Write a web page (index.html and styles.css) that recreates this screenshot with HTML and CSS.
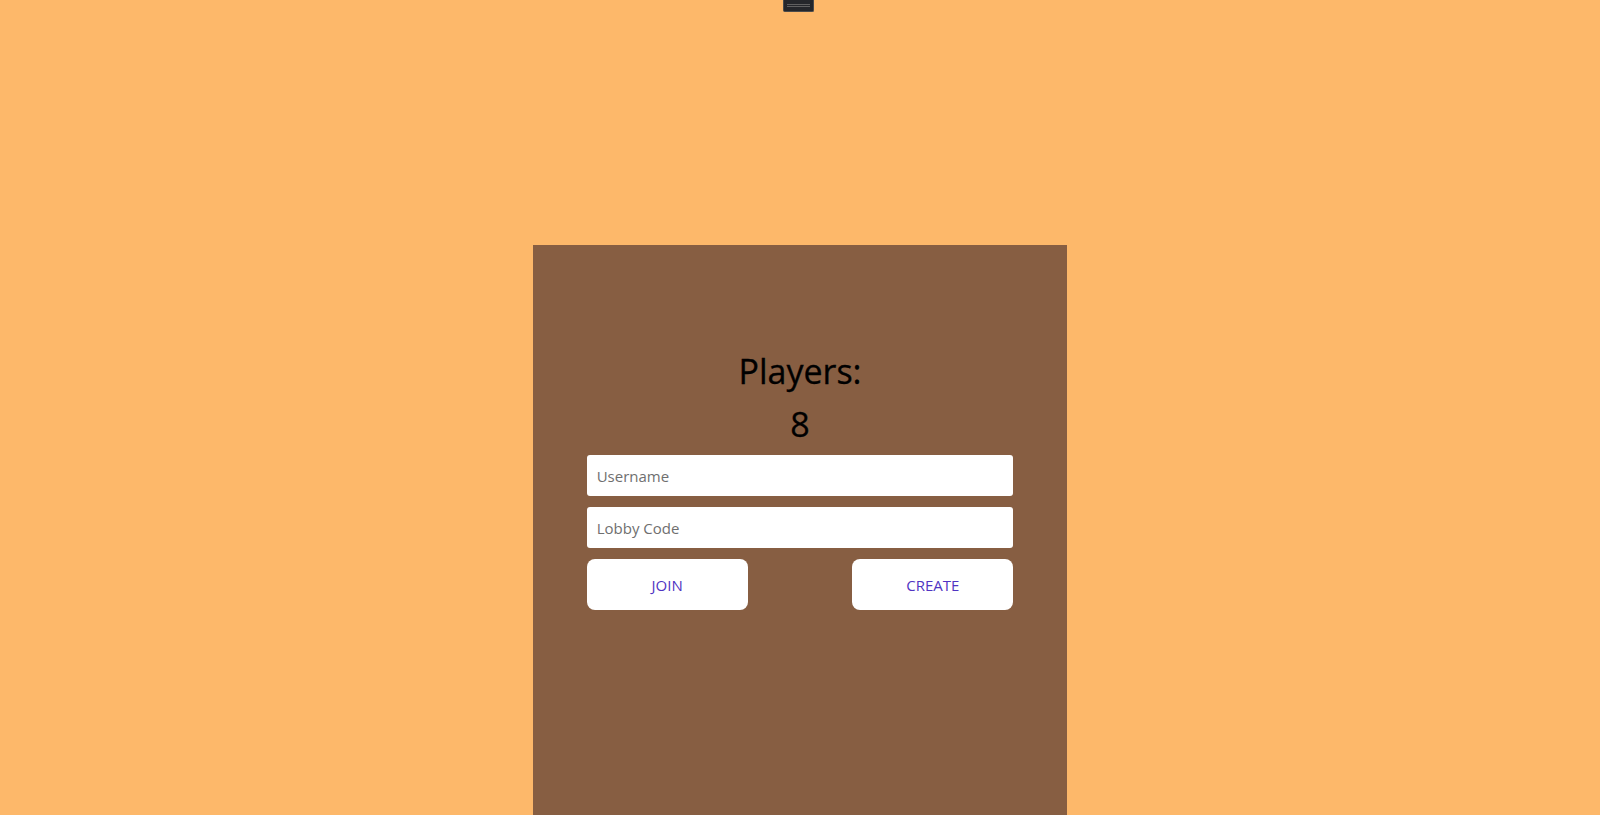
FILE: index.html
```html
<!DOCTYPE html>
<html lang="en">
<head>
    <meta charset="UTF-8">
    <title>Lobby</title>
    <link rel="stylesheet" href="styles.css">
</head>
<body>
    <div class="drawer-tab"><span></span></div>

    <div class="lobby-card">
        <div class="players-label">Players:</div>
        <div class="players-count">8</div>

        <form class="lobby-form" onsubmit="return false">
            <input type="text" placeholder="Username">
            <input type="text" placeholder="Lobby Code">
            <div class="lobby-buttons">
                <button type="button">Join</button>
                <button type="button">Create</button>
            </div>
        </form>
    </div>
</body>
</html>
```

FILE: styles.css
```css
html, body {
    margin: 0;
    height: 100%;
    overflow: hidden;
}
body {
    font-family: "Open Sans", sans-serif;
    background: #fdb86a;
}

/* little pull tab at the top of the screen */
.drawer-tab {
    position: absolute;
    top: 0;
    left: 783px;
    width: 29px;
    height: 11px;
    background: #24262b;
    border: 1px solid #4b4b4b;
    border-top: none;
    border-radius: 0 0 2px 2px;
}
.drawer-tab span {
    position: absolute;
    left: 3px;
    right: 3px;
    top: 4px;
    height: 1px;
    border-top: 1px solid #6e6e6e;
    border-bottom: 1px solid #6e6e6e;
    opacity: 0.8;
}

.lobby-card {
    width: 33.333%;
    height: 570px;
    margin: 245px auto 0;
    padding-top: 103px;
    box-sizing: border-box;
    background: #875e42;
    text-align: center;
}
.players-label,
.players-count {
    font-size: 34px;
    line-height: 46px;
    color: #000;
    -webkit-text-stroke: 0.3px #000;
}
.players-count {
    margin-top: 7px;
}

.lobby-form {
    width: 80%;
    margin: 8px auto 0;
    display: flex;
    flex-direction: column;
    gap: 11px;
}
.lobby-form input {
    height: 41px;
    padding: 0 10px;
    border: none;
    border-radius: 3px;
    font-family: inherit;
    font-size: 15px;
    background: #fff;
    box-sizing: border-box;
}
.lobby-form input::placeholder {
    color: #6f6f6f;
}
.lobby-buttons {
    display: flex;
    justify-content: space-between;
}
.lobby-buttons button {
    width: 161px;
    height: 51px;
    border: none;
    border-radius: 8px;
    background: #fff;
    color: #5034c2;
    font-family: inherit;
    font-size: 15px;
    text-transform: uppercase;
    cursor: pointer;
}
```
